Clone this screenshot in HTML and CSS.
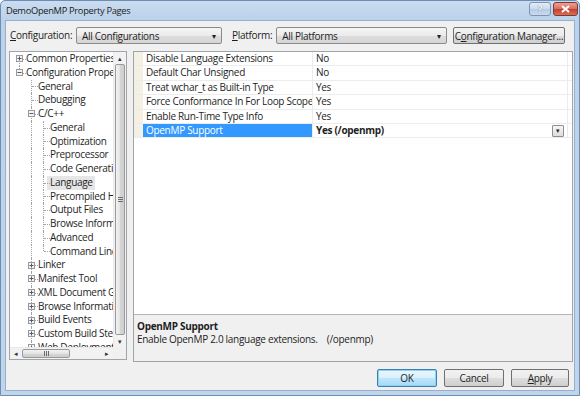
FILE: index.html
```html
<!DOCTYPE html>
<html>
<head>
<meta charset="utf-8">
<title>DemoOpenMP Property Pages</title>
<link rel="stylesheet" href="styles.css">
</head>
<body>
<div class="window">
  <div class="titlebar">
    <span class="title">DemoOpenMP Property Pages</span>
    <div class="caption-btns">
      <span class="cap-btn help">?</span>
      <span class="cap-btn close">
        <svg width="9" height="8" viewBox="0 0 9 8"><path d="M1 1l7 6M8 1L1 7" stroke="#fff" stroke-width="2"/></svg>
      </span>
    </div>
  </div>
  <div class="client">
    <div class="toprow">
      <label class="lbl lbl-config"><u>C</u>onfiguration:</label>
      <div class="combo combo-config"><span>All Configurations</span><span class="arrow">&#9662;</span></div>
      <label class="lbl lbl-platform"><u>P</u>latform:</label>
      <div class="combo combo-platform"><span>All Platforms</span><span class="arrow">&#9662;</span></div>
      <button class="btn btn-cm">C<u>o</u>nfiguration Manager...</button>
    </div>
    <div class="main">
      <div class="tree">
        <div class="tree-list">
          <div class="row"><span class="ind f"><svg class="exp" width="7" height="7" viewBox="0 0 7 7"><rect x=".5" y=".5" width="6" height="6" fill="#f4f4f4" stroke="#9a9a9a"/><path d="M1.5 3.5h4M3.5 1.5v4" stroke="#4a5a7a"/></svg></span><span class="label">Common Properties</span></div>
          <div class="row"><span class="ind l"><svg class="exp" width="7" height="7" viewBox="0 0 7 7"><rect x=".5" y=".5" width="6" height="6" fill="#f4f4f4" stroke="#9a9a9a"/><path d="M1.5 3.5h4" stroke="#4a5a7a"/></svg></span><span class="label">Configuration Properties</span></div>
          <div class="row"><span class="ind"></span><span class="ind t"></span><span class="label">General</span></div>
          <div class="row"><span class="ind"></span><span class="ind t"></span><span class="label">Debugging</span></div>
          <div class="row"><span class="ind"></span><span class="ind t"><svg class="exp" width="7" height="7" viewBox="0 0 7 7"><rect x=".5" y=".5" width="6" height="6" fill="#f4f4f4" stroke="#9a9a9a"/><path d="M1.5 3.5h4" stroke="#4a5a7a"/></svg></span><span class="label">C/C++</span></div>
          <div class="row"><span class="ind"></span><span class="ind v"></span><span class="ind t"></span><span class="label">General</span></div>
          <div class="row"><span class="ind"></span><span class="ind v"></span><span class="ind t"></span><span class="label">Optimization</span></div>
          <div class="row"><span class="ind"></span><span class="ind v"></span><span class="ind t"></span><span class="label">Preprocessor</span></div>
          <div class="row"><span class="ind"></span><span class="ind v"></span><span class="ind t"></span><span class="label">Code Generation</span></div>
          <div class="row"><span class="ind"></span><span class="ind v"></span><span class="ind t"></span><span class="label selected">Language</span></div>
          <div class="row"><span class="ind"></span><span class="ind v"></span><span class="ind t"></span><span class="label">Precompiled Headers</span></div>
          <div class="row"><span class="ind"></span><span class="ind v"></span><span class="ind t"></span><span class="label">Output Files</span></div>
          <div class="row"><span class="ind"></span><span class="ind v"></span><span class="ind t"></span><span class="label">Browse Information</span></div>
          <div class="row"><span class="ind"></span><span class="ind v"></span><span class="ind t"></span><span class="label">Advanced</span></div>
          <div class="row"><span class="ind"></span><span class="ind v"></span><span class="ind l"></span><span class="label">Command Line</span></div>
          <div class="row"><span class="ind"></span><span class="ind t"><svg class="exp" width="7" height="7" viewBox="0 0 7 7"><rect x=".5" y=".5" width="6" height="6" fill="#f4f4f4" stroke="#9a9a9a"/><path d="M1.5 3.5h4M3.5 1.5v4" stroke="#4a5a7a"/></svg></span><span class="label">Linker</span></div>
          <div class="row"><span class="ind"></span><span class="ind t"><svg class="exp" width="7" height="7" viewBox="0 0 7 7"><rect x=".5" y=".5" width="6" height="6" fill="#f4f4f4" stroke="#9a9a9a"/><path d="M1.5 3.5h4M3.5 1.5v4" stroke="#4a5a7a"/></svg></span><span class="label">Manifest Tool</span></div>
          <div class="row"><span class="ind"></span><span class="ind t"><svg class="exp" width="7" height="7" viewBox="0 0 7 7"><rect x=".5" y=".5" width="6" height="6" fill="#f4f4f4" stroke="#9a9a9a"/><path d="M1.5 3.5h4M3.5 1.5v4" stroke="#4a5a7a"/></svg></span><span class="label">XML Document Generator</span></div>
          <div class="row"><span class="ind"></span><span class="ind t"><svg class="exp" width="7" height="7" viewBox="0 0 7 7"><rect x=".5" y=".5" width="6" height="6" fill="#f4f4f4" stroke="#9a9a9a"/><path d="M1.5 3.5h4M3.5 1.5v4" stroke="#4a5a7a"/></svg></span><span class="label">Browse Information</span></div>
          <div class="row"><span class="ind"></span><span class="ind t"><svg class="exp" width="7" height="7" viewBox="0 0 7 7"><rect x=".5" y=".5" width="6" height="6" fill="#f4f4f4" stroke="#9a9a9a"/><path d="M1.5 3.5h4M3.5 1.5v4" stroke="#4a5a7a"/></svg></span><span class="label">Build Events</span></div>
          <div class="row"><span class="ind"></span><span class="ind t"><svg class="exp" width="7" height="7" viewBox="0 0 7 7"><rect x=".5" y=".5" width="6" height="6" fill="#f4f4f4" stroke="#9a9a9a"/><path d="M1.5 3.5h4M3.5 1.5v4" stroke="#4a5a7a"/></svg></span><span class="label">Custom Build Step</span></div>
          <div class="row"><span class="ind"></span><span class="ind t"><svg class="exp" width="7" height="7" viewBox="0 0 7 7"><rect x=".5" y=".5" width="6" height="6" fill="#f4f4f4" stroke="#9a9a9a"/><path d="M1.5 3.5h4M3.5 1.5v4" stroke="#4a5a7a"/></svg></span><span class="label">Web Deployment</span></div>
        </div>
        <div class="vscroll">
          <span class="sb-arrow">&#9652;</span>
          <div class="vtrack"><div class="vthumb"><span class="grip-v"></span></div></div>
          <span class="sb-arrow">&#9662;</span>
        </div>
        <div class="hscroll">
          <span class="sb-arrow">&#9666;</span>
          <div class="htrack"><div class="hthumb"><span class="grip-h"></span></div></div>
          <span class="sb-arrow">&#9656;</span>
        </div>
        <div class="corner"></div>
      </div>
      <div class="right">
        <div class="grid">
          <div class="prow"><span class="gut"></span><span class="pname">Disable Language Extensions</span><span class="pval">No</span></div>
          <div class="prow"><span class="gut"></span><span class="pname">Default Char Unsigned</span><span class="pval">No</span></div>
          <div class="prow"><span class="gut"></span><span class="pname">Treat wchar_t as Built-in Type</span><span class="pval">Yes</span></div>
          <div class="prow"><span class="gut"></span><span class="pname">Force Conformance In For Loop Scope</span><span class="pval">Yes</span></div>
          <div class="prow"><span class="gut"></span><span class="pname">Enable Run-Time Type Info</span><span class="pval">Yes</span></div>
          <div class="prow active"><span class="gut"></span><span class="pname">OpenMP Support</span><span class="pval"><b>Yes (/openmp)</b><span class="dd">&#9662;</span></span></div>
          <div class="grid-fill"><span class="gut"></span></div>
        </div>
        <div class="desc">
          <div class="desc-title">OpenMP Support</div>
          <div class="desc-text">Enable OpenMP 2.0 language extensions.&nbsp;&nbsp;&nbsp; (/openmp)</div>
        </div>
      </div>
    </div>
    <div class="buttons">
      <button class="btn dlg default">OK</button>
      <button class="btn dlg">Cancel</button>
      <button class="btn dlg"><u>A</u>pply</button>
    </div>
  </div>
</div>
</body>
</html>
```

FILE: styles.css
```css
* { box-sizing: border-box; }
html, body { margin: 0; padding: 0; }
body {
  width: 580px;
  height: 396px;
  overflow: hidden;
  background: #fff;
  font-family: "Open Sans", "Noto Sans", sans-serif;
  font-size: 10px;
  letter-spacing: -0.3px;
  color: #1e1e1e;
}
.window {
  width: 580px;
  height: 396px;
  display: flex;
  flex-direction: column;
  border: 1px solid #6f8db2;
  border-radius: 5px 5px 0 0;
  background: linear-gradient(#cadcf0, #bcd2ea 18px, #bfd5ec);
  padding: 0 4px 4px 4px;
}
.titlebar {
  height: 19px;
  flex: none;
  display: flex;
  justify-content: space-between;
  align-items: flex-start;
}
.title {
  padding: 3px 0 0 1px;
  color: #1a1a1a;
  font-size: 9.3px;
  line-height: 14px;
  white-space: nowrap;
}
.caption-btns {
  display: flex;
  gap: 2px;
  margin: 1px -3px 0 0;
}
.cap-btn {
  height: 14px;
  display: flex;
  align-items: center;
  justify-content: center;
  border: 1px solid #7d95b2;
  border-radius: 3px;
}
.help {
  width: 22px;
  background: linear-gradient(#e4edf7, #c9d9ec 50%, #b6cae2 51%, #c8dbef);
  color: #f5f8fc;
  font-weight: bold;
  font-size: 10px;
  text-shadow: 0 0 1px #4d6585;
}
.close {
  width: 25px;
  border-color: #7a3b35;
  background: linear-gradient(#eba193, #d96c5c 50%, #c63f2c 51%, #dc6c55);
}
.client {
  flex: 1;
  display: flex;
  flex-direction: column;
  background: #f0f0f0;
  border: 1px solid #98aecb;
  padding: 6px 0 0 0;
}
.toprow {
  display: flex;
  align-items: center;
  height: 17px;
  padding: 0 9px 0 4px;
  white-space: nowrap;
}
.lbl {
  line-height: 17px;
  flex: none;
}
.lbl-config { width: 66px; }
.lbl-platform { margin: 0 4px 0 10px; }
.combo {
  flex: none;
  height: 17px;
  display: flex;
  align-items: center;
  justify-content: space-between;
  border: 1px solid #8a8a8a;
  border-radius: 2px;
  background: linear-gradient(#f5f5f5, #ebebeb 50%, #dddddd 51%, #d6d6d6);
  padding: 0 5px 0 5px;
}
.combo .arrow { font-size: 8px; color: #222; }
.combo-config { width: 146px; }
.combo-platform { flex: 1; min-width: 0; }
.btn {
  font-family: inherit;
  font-size: 10px;
  letter-spacing: -0.3px;
  color: #1e1e1e;
  height: 18px;
  padding: 0;
  white-space: nowrap;
  border: 1px solid #707070;
  border-radius: 2px;
  background: linear-gradient(#f2f2f2, #ebebeb 50%, #dddddd 51%, #cfcfcf);
}
.btn-cm { width: 112px; margin-left: 6px; height: 17px; flex: none; }
.main {
  display: flex;
  margin-top: 7px;
  padding-left: 3px;
  height: 311px;
}
.tree {
  width: 118px;
  height: 309px;
  border: 1px solid #a0a4ab;
  background: #fff;
  display: grid;
  grid-template-columns: 1fr 13px;
  grid-template-rows: 1fr 12px;
}
.tree-list {
  overflow: hidden;
  padding: 0 0 0 3px;
}
.row {
  display: flex;
  align-items: stretch;
  height: 13.75px;
  white-space: nowrap;
}
.ind {
  position: relative;
  flex: none;
  width: 12px;
  display: flex;
  align-items: center;
}
.ind::before, .ind::after { content: none; position: absolute; }
.ind.v::before, .ind.t::before, .ind.l::before, .ind.f::before {
  content: "";
  left: 6px;
  border-left: 1px dotted #a3a3a3;
}
.ind.v::before, .ind.t::before { top: 0; bottom: 0; }
.ind.l::before { top: 0; height: 50%; }
.ind.f::before { top: 50%; bottom: 0; }
.ind.t::after, .ind.l::after, .ind.f::after {
  content: "";
  left: 7px;
  right: -1px;
  top: 50%;
  border-top: 1px dotted #a3a3a3;
}
.exp { position: relative; z-index: 1; margin-left: 3px; }
.label {
  padding: 0 2px 0 1px;
  line-height: 13.75px;
}
.label.selected {
  background: #e6e6e6;
  margin-left: -2px;
  padding: 0 2px 0 3px;
}
.vscroll {
  display: flex;
  flex-direction: column;
  background: #f2f2f2;
  border-left: 1px solid #e8e8e8;
}
.sb-arrow {
  flex: none;
  width: 12px;
  height: 12px;
  display: flex;
  align-items: center;
  justify-content: center;
  font-size: 7px;
  color: #333;
}
.vtrack { flex: 1; padding: 0 1px; }
.vthumb {
  height: 100%;
  border: 1px solid #999;
  border-radius: 2px;
  background: linear-gradient(to right, #f3f3f3, #e3e3e3 50%, #d5d5d5 51%, #cfcfcf);
  display: flex;
  align-items: center;
  justify-content: center;
  margin-bottom: 2px;
}
.grip-v {
  width: 5px;
  height: 5px;
  background: repeating-linear-gradient(#6c6c6c 0 1px, transparent 1px 2px);
}
.hscroll {
  display: flex;
  background: #f2f2f2;
  border-top: 1px solid #e8e8e8;
}
.hscroll .sb-arrow { height: 11px; }
.htrack { flex: 1; padding: 1px 0; }
.hthumb {
  width: 48px;
  height: 100%;
  border: 1px solid #999;
  border-radius: 2px;
  background: linear-gradient(#f3f3f3, #e3e3e3 50%, #d5d5d5 51%, #cfcfcf);
  display: flex;
  align-items: center;
  justify-content: center;
}
.grip-h {
  width: 5px;
  height: 5px;
  background: repeating-linear-gradient(to right, #6c6c6c 0 1px, transparent 1px 2px);
}
.corner { background: #f0f0f0; }
.right {
  width: 440px;
  margin-left: 6px;
  display: flex;
  flex-direction: column;
  border: 1px solid #a0a4ab;
}
.grid {
  flex: 1;
  display: flex;
  flex-direction: column;
  background: #fff;
}
.prow {
  display: flex;
  height: 14.4px;
  border-bottom: 1px solid #ececec;
  white-space: nowrap;
}
.gut { width: 9px; flex: none; background: #f4f0e4; }
.pname {
  width: 170px;
  flex: none;
  padding-left: 3px;
  line-height: 13.4px;
  border-right: 1px solid #ececec;
  overflow: hidden;
}
.pval {
  flex: 1;
  display: flex;
  justify-content: space-between;
  align-items: center;
  padding: 0 3px 0 3px;
  margin-right: 4px;
  border-right: 1px solid #ececec;
  line-height: 13.4px;
}
.prow.active .pname { background: #3399ff; color: #fff; }
.dd {
  width: 12px;
  height: 12px;
  border: 1px solid #8f8f8f;
  border-radius: 1px;
  background: linear-gradient(#f6f6f6, #dcdcdc);
  font-size: 7px;
  display: flex;
  align-items: center;
  justify-content: center;
  color: #222;
}
.grid-fill { flex: 1; display: flex; }
.grid-fill .gut { background: #fff; }
.desc {
  height: 47px;
  border-top: 1px solid #b5b5b5;
  background: #f0f0f0;
  padding: 5px 0 0 3px;
  line-height: 13px;
}
.desc-title { font-weight: bold; }
.buttons {
  display: flex;
  justify-content: flex-end;
  gap: 7px;
  margin-top: 7px;
  padding-right: 5px;
}
.btn.dlg { width: 60px; }
.btn.dlg:last-child { width: 58px; }
.btn.default {
  border-color: #3c7fb1;
  box-shadow: inset 0 0 0 1px #8fd1f3;
  background: linear-gradient(#eaf6fd, #d9f0fc 50%, #bee6fd 51%, #a7d9f5);
}
```
